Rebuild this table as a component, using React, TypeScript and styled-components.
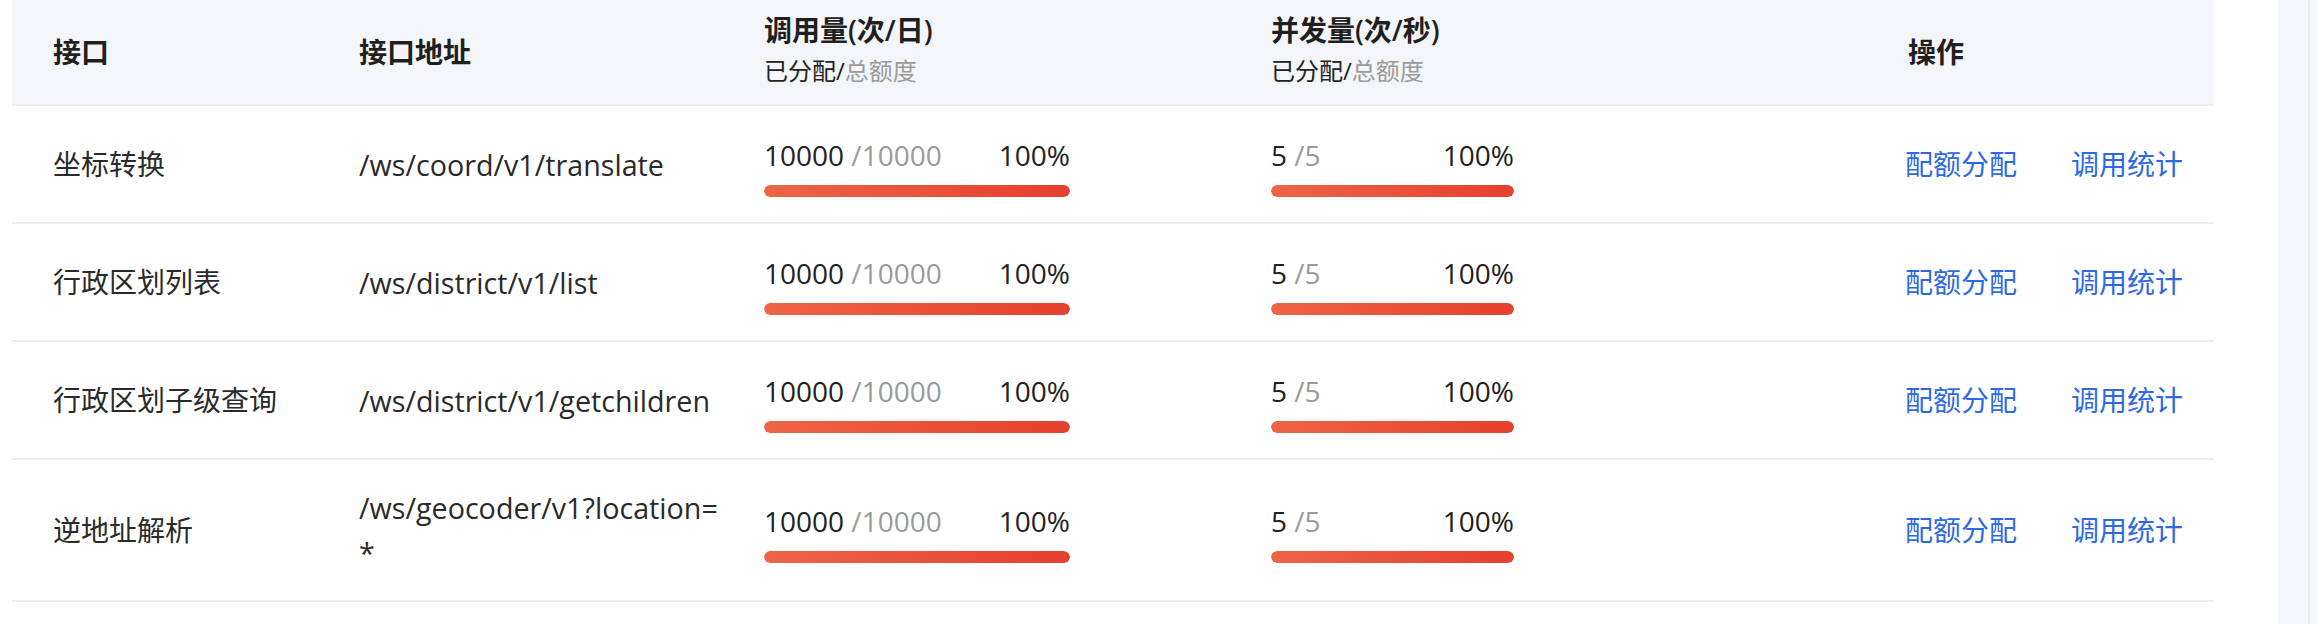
import styled, { createGlobalStyle } from 'styled-components';

type Api = {
  name: string;
  path: string;
  daily: [number, number];
  qps: [number, number];
};

const APIS: Api[] = [
  { name: '坐标转换', path: '/ws/coord/v1/translate', daily: [10000, 10000], qps: [5, 5] },
  { name: '行政区划列表', path: '/ws/district/v1/list', daily: [10000, 10000], qps: [5, 5] },
  { name: '行政区划子级查询', path: '/ws/district/v1/getchildren', daily: [10000, 10000], qps: [5, 5] },
  { name: '逆地址解析', path: '/ws/geocoder/v1?location=*', daily: [10000, 10000], qps: [5, 5] },
];

function Usage({ used, total, width }: { used: number; total: number; width: number }) {
  const pct = Math.round((used / total) * 100);
  return (
    <UsageBox $width={width}>
      <UsageMeta>
        <span>
          {used} <Total>/{total}</Total>
        </span>
        <span>{pct}%</span>
      </UsageMeta>
      <Track>
        <Fill style={{ width: `${pct}%` }} />
      </Track>
    </UsageBox>
  );
}

function App() {
  return (
    <Page>
      <GlobalStyle />
      <Main>
        <Table>
          <HeaderRow>
            <HeadCell>接口</HeadCell>
            <HeadCell>接口地址</HeadCell>
            <HeadCell>
              <HeadTitle>调用量(次/日)</HeadTitle>
              <HeadSub>
                已分配/<Total>总额度</Total>
              </HeadSub>
            </HeadCell>
            <HeadCell>
              <HeadTitle>并发量(次/秒)</HeadTitle>
              <HeadSub>
                已分配/<Total>总额度</Total>
              </HeadSub>
            </HeadCell>
            <HeadCell $pad={3}>操作</HeadCell>
          </HeaderRow>
          {APIS.map((api) => (
            <Row key={api.path}>
              <Cell>{api.name}</Cell>
              <PathCell>{api.path}</PathCell>
              <Cell>
                <Usage used={api.daily[0]} total={api.daily[1]} width={306} />
              </Cell>
              <Cell>
                <Usage used={api.qps[0]} total={api.qps[1]} width={243} />
              </Cell>
              <Cell>
                <Actions>
                  <LinkButton>配额分配</LinkButton>
                  <LinkButton>调用统计</LinkButton>
                </Actions>
              </Cell>
            </Row>
          ))}
        </Table>
      </Main>
      <SideTrack />
    </Page>
  );
}

export default App;

const GlobalStyle = createGlobalStyle`
  html, body {
    margin: 0;
    padding: 0;
    background: #fff;
  }
  body {
    font-family: "Open Sans", "Noto Sans CJK SC", sans-serif;
    color: #2a2a2a;
  }
`;

const Page = styled.div`
  display: flex;
  min-height: 624px;
`;

const Main = styled.div`
  flex: 1;
  padding: 0 64px 0 12px;
`;

const Table = styled.div`
  width: 2202px;
`;

const HeaderRow = styled.div`
  display: grid;
  grid-template-columns: 306px 405px 507px 634px 1fr;
  align-items: center;
  height: 104px;
  padding-left: 41px;
  background: #f4f5f9;
  border-bottom: 2px solid #ebecf0;
`;

const HeadCell = styled.div<{ $pad?: number }>`
  padding-left: ${(p) => p.$pad ?? 0}px;
  font-size: 28px;
  font-weight: 600;
  color: #1f1f1f;
  line-height: 36px;
`;

const HeadTitle = styled.div`
  line-height: 36px;
  margin-top: -3px;
`;

const HeadSub = styled.div`
  margin-top: 5px;
  font-size: 24px;
  font-weight: 400;
  line-height: 36px;
  color: #222;
`;

const Total = styled.span`
  color: #9a9a9a;
`;

const Row = styled.div`
  display: grid;
  grid-template-columns: 306px 405px 507px 634px 1fr;
  align-items: center;
  padding-left: 41px;
  border-bottom: 2px solid #ebecf0;
`;

const Cell = styled.div`
  padding: 25px 0;
  font-size: 28px;
  line-height: 45px;
`;

const PathCell = styled(Cell)`
  width: 372px;
  font-size: 28.7px;
  word-break: break-all;
`;

const UsageBox = styled.div<{ $width: number }>`
  width: ${(p) => p.$width}px;
`;

const UsageMeta = styled.div`
  display: flex;
  justify-content: space-between;
  line-height: 48px;
  color: #222;
`;

const Track = styled.div`
  height: 12px;
  margin-top: 6px;
  border-radius: 6px;
  background: #f0f1f4;
  overflow: hidden;
`;

const Fill = styled.div`
  height: 100%;
  border-radius: 6px;
  background: linear-gradient(90deg, #ed6446 0%, #e6402f 100%);
`;

const Actions = styled.div`
  display: flex;
  gap: 54px;
`;

const LinkButton = styled.a`
  color: #2d69e3;
  cursor: pointer;
`;

const SideTrack = styled.div`
  width: 40px;
  background: #f4f5f9;
  box-shadow: inset -8px 0 0 #f7f8fa, inset -10px 0 0 #e9eaee;
`;
